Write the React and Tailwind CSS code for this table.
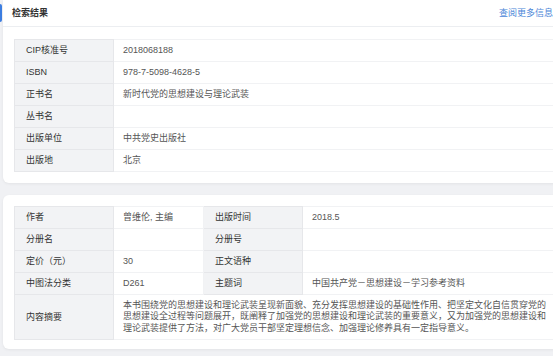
const font = { fontFamily: '"Liberation Sans", "Noto Sans CJK SC", sans-serif' };

const basic = [
  ["CIP核准号", "2018068188"],
  ["ISBN", "978-7-5098-4628-5"],
  ["正书名", "新时代党的思想建设与理论武装"],
  ["丛书名", ""],
  ["出版单位", "中共党史出版社"],
  ["出版地", "北京"],
];

const detail = [
  ["作者", "曾维伦, 主编", "出版时间", "2018.5"],
  ["分册名", "", "分册号", ""],
  ["定价（元）", "30", "正文语种", ""],
  ["中图法分类", "D261", "主题词", "中国共产党－思想建设－学习参考资料"],
];

const summary =
  "本书围绕党的思想建设和理论武装呈现新面貌、充分发挥思想建设的基础性作用、把坚定文化自信贯穿党的思想建设全过程等问题展开，既阐释了加强党的思想建设和理论武装的重要意义，又为加强党的思想建设和理论武装提供了方法，对广大党员干部坚定理想信念、加强理论修养具有一定指导意义。";

const Label = ({ children, className = "" }) => (
  <td className={`bg-[#f2f3f5] border border-[#e6e7ea] pl-[11px] text-[#333] w-[99px] ${className}`}>{children}</td>
);

const Value = ({ children, className = "", ...rest }) => (
  <td className={`border border-[#f1f2f4] pl-[9px] text-[#555] ${className}`} {...rest}>{children}</td>
);

export default function App() {
  return (
    <div className="w-[553px] h-[356px] overflow-hidden bg-[#f0f1f4] text-[9px] leading-none" style={font}>
      <div className="w-[562px] pl-[3px] flex flex-col gap-[12px]">
        {/* Card 1 */}
        <div className="relative bg-white rounded-b-md shadow-[0_1px_3px_rgba(0,0,0,0.06)]">
          <div className="absolute left-[-3px] top-[4px] w-[2px] h-[18px] bg-[#3b7de0] rounded-r" />
          <div className="h-[27px] flex items-center justify-between pl-[9px] pr-[9px] border-b border-[#eceef1]">
            <span className="font-semibold text-[#333]">检索结果</span>
            <span className="text-[#4a86d8]">查阅更多信息</span>
          </div>
          <div className="pl-[11px] pt-[12px] pb-[11px]">
            <table className="w-full border-collapse">
              <tbody>
                {basic.map(([k, v]) => (
                  <tr key={k} className="h-[22px]">
                    <Label>{k}</Label>
                    <Value>{v}</Value>
                  </tr>
                ))}
              </tbody>
            </table>
          </div>
        </div>

        {/* Card 2 */}
        <div className="bg-white rounded-md shadow-[0_1px_3px_rgba(0,0,0,0.06)] pl-[11px] pt-[11px] pb-[9px]">
          <table className="w-full border-collapse">
            <tbody>
              {detail.map(([a, b, c, d]) => (
                <tr key={a} className="h-[22px]">
                  <Label>{a}</Label>
                  <Value className="w-[90px]">{b}</Value>
                  <Label className="pl-[10px]">{c}</Label>
                  <Value>{d}</Value>
                </tr>
              ))}
              <tr className="h-[45px]">
                <Label>内容摘要</Label>
                <Value colSpan={3} className="text-[#444] leading-[11.5px] pr-[14px]">
                  {summary}
                </Value>
              </tr>
            </tbody>
          </table>
        </div>
      </div>
    </div>
  );
}
